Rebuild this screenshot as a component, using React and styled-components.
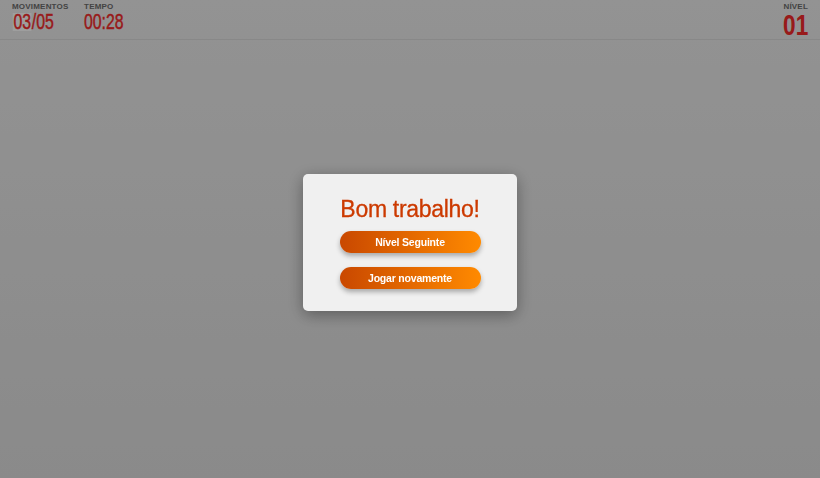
import React from "react";
import styled, { createGlobalStyle } from "styled-components";

const GlobalStyle = createGlobalStyle`
  html, body {
    margin: 0;
    height: 100%;
  }
  body {
    font-family: "Liberation Sans", Arial, sans-serif;
    background: linear-gradient(#ededed, #dfdfdf);
  }
`;

const Page = styled.div`
  height: 478px;
  overflow: hidden;
`;

const Header = styled.header`
  display: flex;
  align-items: flex-start;
  justify-content: space-between;
  height: 39px;
  padding: 0 12px;
  border-bottom: 1px solid #dcdcdc;
`;

const StatGroup = styled.div`
  display: flex;
  gap: 14px;
`;

const Stat = styled.div`
  display: flex;
  flex-direction: column;
  align-items: ${(p) => (p.$right ? "flex-end" : "flex-start")};
  padding-top: 3px;
`;

const Label = styled.span`
  font-size: 8px;
  font-weight: 700;
  letter-spacing: 0.2px;
  color: #6c6c6c;
  line-height: 8px;
`;

const Value = styled.span`
  display: inline-block;
  font-size: ${(p) => (p.$big ? "29px" : "22px")};
  font-weight: ${(p) => (p.$big ? 700 : 400)};
  color: #f52a2a;
  line-height: ${(p) => (p.$big ? "29px" : "22px")};
  transform: scaleX(${(p) => (p.$big ? 0.78 : 0.72)});
  transform-origin: ${(p) => (p.$big ? "right" : "left")} center;
  -webkit-text-stroke: ${(p) => (p.$big ? "0" : "0.45px")} #f52a2a;
  white-space: nowrap;
`;

const Flash = styled.span`
  display: inline-block;
  line-height: 18px;
  background: #ffffff;
  padding: 0 1px;
  margin-left: 1px;
`;

const Overlay = styled.div`
  position: fixed;
  inset: 0;
  background: rgba(0, 0, 0, 0.38);
  display: flex;
  align-items: center;
  justify-content: center;
`;

const Modal = styled.div`
  width: 214px;
  height: 137px;
  box-sizing: border-box;
  margin-top: 7px;
  background: #f0f0f0;
  border-radius: 5px;
  box-shadow: 0 4px 16px rgba(0, 0, 0, 0.35);
  display: flex;
  flex-direction: column;
  align-items: center;
  padding-top: 22px;
`;

const Title = styled.h2`
  margin: 0 0 8px;
  font-size: 23px;
  font-weight: 400;
  color: #cc3a00;
  letter-spacing: -0.3px;
  -webkit-text-stroke: 0.3px #cc3a00;
`;

const Button = styled.button`
  width: 141px;
  height: 22px;
  margin-bottom: 14px;
  border: none;
  border-radius: 11px;
  background: linear-gradient(90deg, #c94800, #ff8a00);
  color: #fff;
  font-family: "Liberation Sans", Arial, sans-serif;
  font-size: 10.5px;
  font-weight: 700;
  letter-spacing: -0.2px;
  box-shadow: 0 3px 5px rgba(0, 0, 0, 0.3);
  cursor: pointer;
`;

export default function App() {
  return (
    <Page>
      <GlobalStyle />
      <Header>
        <StatGroup>
          <Stat>
            <Label>MOVIMENTOS</Label>
            <Value>
              <Flash>03</Flash>/05
            </Value>
          </Stat>
          <Stat>
            <Label>TEMPO</Label>
            <Value>00:28</Value>
          </Stat>
        </StatGroup>
        <Stat $right>
          <Label>NÍVEL</Label>
          <Value $big>01</Value>
        </Stat>
      </Header>
      <Overlay>
        <Modal>
          <Title>Bom trabalho!</Title>
          <Button>Nível Seguinte</Button>
          <Button>Jogar novamente</Button>
        </Modal>
      </Overlay>
    </Page>
  );
}
